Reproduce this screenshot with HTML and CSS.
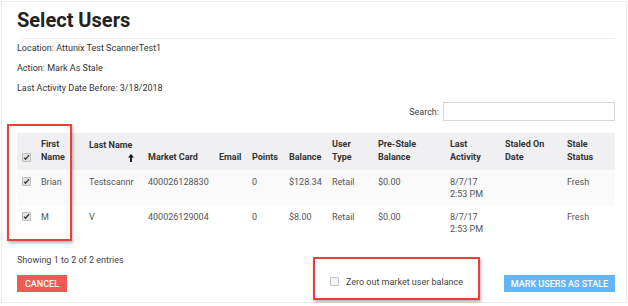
FILE: index.html
```html
<!DOCTYPE html>
<html>

<head>
    <title>Select Users</title>
    <link rel="stylesheet" href="styles.css">
</head>

<body>
    <div class="page">
        <h1 class="title">Select Users</h1>
        <div class="rule"></div>

        <p class="info">Location: Attunix Test ScannerTest1</p>
        <p class="info">Action: Mark As Stale</p>
        <p class="info">Last Activity Date Before: 3/18/2018</p>

        <div class="search-row">
            <label for="search">Search:</label>
            <input id="search" class="search-input" type="text">
        </div>

        <table class="users">
            <colgroup>
                <col style="width: 20px">
                <col style="width: 48px">
                <col style="width: 59px">
                <col style="width: 71px">
                <col style="width: 33px">
                <col style="width: 37px">
                <col style="width: 43px">
                <col style="width: 46px">
                <col style="width: 72px">
                <col style="width: 55px">
                <col style="width: 62px">
                <col style="width: 52px">
            </colgroup>
            <thead>
                <tr>
                    <th><span class="check on"></span></th>
                    <th>First<br>Name</th>
                    <th class="sorted">Last Name<span class="sort-arrow"><svg width="6" height="8" viewBox="0 0 6 8"><path d="M3 0 L6 3.4 L3.9 3.4 L3.9 8 L2.1 8 L2.1 3.4 L0 3.4 Z" fill="#111"/></svg></span></th>
                    <th>Market Card</th>
                    <th>Email</th>
                    <th>Points</th>
                    <th>Balance</th>
                    <th>User<br>Type</th>
                    <th>Pre-Stale<br>Balance</th>
                    <th>Last<br>Activity</th>
                    <th>Staled On<br>Date</th>
                    <th>Stale<br>Status</th>
                </tr>
            </thead>
            <tbody>
                <tr class="odd">
                    <td><span class="check on"></span></td>
                    <td>Brian</td>
                    <td>Testscannr</td>
                    <td>400026128830</td>
                    <td></td>
                    <td>0</td>
                    <td>$128.34</td>
                    <td>Retail</td>
                    <td>$0.00</td>
                    <td>8/7/17<br>2:53 PM</td>
                    <td></td>
                    <td>Fresh</td>
                </tr>
                <tr>
                    <td><span class="check on"></span></td>
                    <td>M</td>
                    <td>V</td>
                    <td>400026129004</td>
                    <td></td>
                    <td>0</td>
                    <td>$8.00</td>
                    <td>Retail</td>
                    <td>$0.00</td>
                    <td>8/7/17<br>2:53 PM</td>
                    <td></td>
                    <td>Fresh</td>
                </tr>
            </tbody>
        </table>

        <p class="entries">Showing 1 to 2 of 2 entries</p>

        <div class="actions">
            <button class="btn btn-cancel">Cancel</button>
            <label class="zero-out"><span class="check"></span>Zero out market user balance</label>
            <button class="btn btn-stale">Mark Users As Stale</button>
        </div>

        <!-- annotation boxes drawn over the screenshot -->
        <div class="mark mark-names"></div>
        <div class="mark mark-zero"></div>
    </div>
</body>
</html>
```

FILE: styles.css
```css
body {
    margin: 1px;
    font-family: Roboto, "Liberation Sans", sans-serif;
    font-size: 9px;
    color: #333;
    background: #fff;
}
.page {
    position: relative;
    box-sizing: border-box;
    width: 626px;
    height: 302px;
    border: 1px solid #ececec;
    padding: 0 11px 0 15px;
}
.title {
    margin: 5px 0 0 0;
    font-size: 20px;
    line-height: 26px;
    font-weight: bold;
    color: #222;
}
.rule {
    margin: 5px 0 0 4px;
    border-top: 1px solid #eeeeee;
}
.info {
    margin: 0;
    height: 20px;
    line-height: 17px;
}
.info:first-of-type {
    margin-top: 1px;
}
.search-row {
    display: flex;
    justify-content: flex-end;
    align-items: center;
    gap: 4px;
    margin-top: 2px;
    color: #444;
}
.search-input {
    box-sizing: border-box;
    width: 172px;
    height: 19px;
    margin: 0;
    border: 1px solid #d6d6d6;
    padding: 0 4px;
}
.users {
    width: 598px;
    margin-top: 12px;
    table-layout: fixed;
    border-collapse: collapse;
}
.users th {
    box-sizing: border-box;
    height: 37px;
    background: #f0f0f2;
    text-align: left;
    vertical-align: bottom;
    font-weight: bold;
    color: #333;
    line-height: 13px;
    padding: 0 2px 6px 4px;
}
.users td {
    box-sizing: border-box;
    height: 36px;
    vertical-align: top;
    line-height: 12px;
    padding: 6px 2px 0 4px;
    color: #555;
    white-space: nowrap;
}
.users tr.odd td {
    height: 35px;
    background: #fafafa;
}
.sort-arrow {
    display: block;
    text-align: right;
    padding-right: 8px;
    height: 12px;
}
.sort-arrow svg {
    vertical-align: top;
    margin-top: 2px;
}
.check {
    display: inline-block;
    box-sizing: border-box;
    width: 9px;
    height: 9px;
    border: 1px solid #c4c4c4;
    border-radius: 1px;
    background: #f4f4f4;
    vertical-align: middle;
    margin-left: 1px;
}
.check.on {
    background: #e4e4e4 url("data:image/svg+xml,%3Csvg xmlns='http://www.w3.org/2000/svg' viewBox='0 0 9 9'%3E%3Cpath d='M2 4.6 L3.6 6.2 L7 2.2' stroke='%23333' stroke-width='1.3' fill='none'/%3E%3C/svg%3E") center / 9px 9px no-repeat;
    border-color: #bbbbbb;
}
.users th .check {
    margin-bottom: 1px;
}
.users td .check {
    margin-top: 1px;
    vertical-align: top;
}
.entries {
    margin: 13px 0 0 0;
    line-height: 13px;
    color: #444;
}
.actions {
    display: flex;
    align-items: center;
    margin-top: 8px;
}
.btn {
    height: 17px;
    border: none;
    padding: 0 4px;
    font-family: Roboto, "Liberation Sans", sans-serif;
    font-size: 9px;
    font-weight: 500;
    text-transform: uppercase;
    color: #fff;
    cursor: pointer;
}
.btn-cancel {
    width: 50px;
    background: #ec5a53;
}
.btn-stale {
    width: 111px;
    background: #64b5f6;
}
.zero-out {
    display: flex;
    align-items: center;
    gap: 7px;
    margin-left: auto;
    margin-right: 41px;
    margin-top: -4px;
    color: #444;
}
.zero-out .check {
    margin: 0;
}
.mark {
    position: absolute;
    border: 2px solid #e8413c;
    box-shadow: 1px 2px 3px rgba(0, 0, 0, 0.3);
}
.mark-names {
    left: 5px;
    top: 122px;
    width: 61px;
    height: 113px;
}
.mark-zero {
    left: 311px;
    top: 255px;
    width: 163px;
    height: 39px;
}
```
